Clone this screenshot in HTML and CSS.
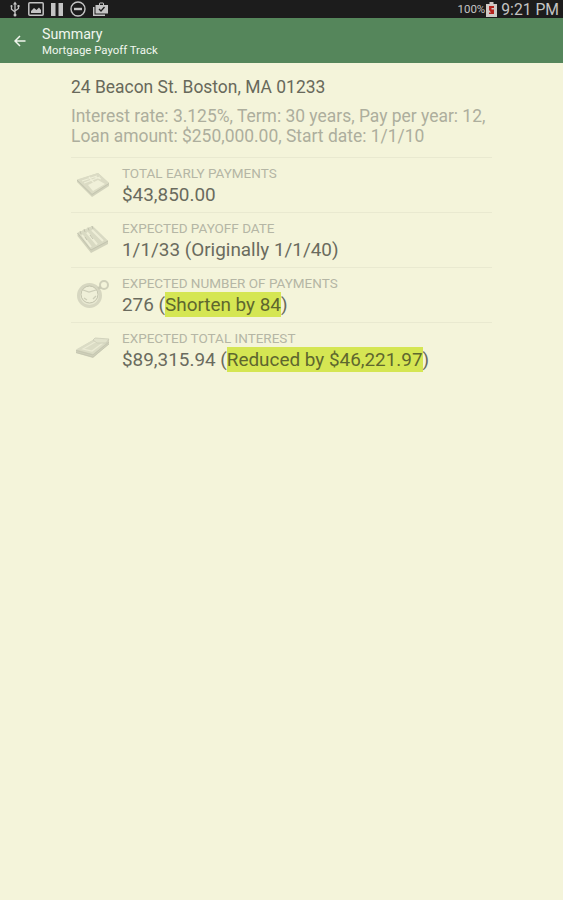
FILE: index.html
```html
<!DOCTYPE html>
<html lang="en">
<head>
  <meta charset="UTF-8">
  <meta name="viewport" content="width=device-width, initial-scale=1">
  <title>Mortgage Payoff Track</title>
  <link rel="stylesheet" href="styles.css">
</head>

<body>

  <div class="status-bar">
    <div class="status-icons">
      <svg width="12" height="16" viewBox="0 0 10 16" fill="none" stroke="#c4c4c4" stroke-width="1.3">
        <path d="M5 2v12M1.500 5v3.200L5 11M8.500 5v2.500L5 10"/>
        <path d="M3 3.500L5 .5l2 3z" fill="#c4c4c4" stroke="none"/>
        <circle cx="1.500" cy="5" r="1" fill="#c4c4c4" stroke="none"/>
        <rect x="7.500" y="4" width="2" height="2" fill="#c4c4c4" stroke="none"/>
        <circle cx="5" cy="14" r="1.500" fill="#c4c4c4" stroke="none"/>
      </svg>
      <svg width="16" height="14" viewBox="0 0 16 14">
        <rect x=".8" y=".8" width="14.400" height="12.400" rx="1" fill="none" stroke="#c4c4c4" stroke-width="1.500"/>
        <path d="M3 11V9l3-3 2.500 2L11 5.500 13 8v3z" fill="#c4c4c4"/>
      </svg>
      <svg width="12" height="13" viewBox="0 0 12 13">
        <path d="M0 0h4.500v13H0zM7.500 0H12v13H7.500z" fill="#c4c4c4"/>
      </svg>
      <svg width="16" height="16" viewBox="0 0 16 16" fill="none" stroke="#c4c4c4">
        <circle cx="8" cy="8" r="7" stroke-width="1.400"/>
        <path d="M4 8h8" stroke-width="2.400"/>
      </svg>
      <svg width="15" height="14" viewBox="0 0 15 14">
        <path d="M0 5h1.500v7.500H12V14H0z" fill="#c4c4c4"/>
        <path d="M2.500 3H6V1.500L7 .5h3l1 1V3h4v8.500H2.500zM7 3h3V1.500H7z" fill="#c4c4c4" fill-rule="evenodd"/>
        <path d="M6 7l2 2 3.500-4" fill="none" stroke="#1c1c1c" stroke-width="1.300"/>
      </svg>
    </div>
    <div class="status-right">
      <span class="percent">100%</span>
      <svg width="11" height="15" viewBox="0 0 11 15">
        <path d="M3.500 0h4v2H11v13H0V2h3.500z" fill="#cfcac6"/>
        <path d="M3 4h5v2H5.500v1.500H8V12H3v-1.500h2L3 8z" fill="#b5231c"/>
      </svg>
      <span class="clock">9:21 PM</span>
    </div>
  </div>

  <header class="app-bar">
    <svg class="back" width="12" height="12" viewBox="0 0 12 12" fill="none" stroke="#f1f6ee" stroke-width="1.500">
      <path d="M11.500 6H1.200M6 1L1 6l5 5"/>
    </svg>
    <div>
      <div class="title">Summary</div>
      <div class="subtitle">Mortgage Payoff Track</div>
    </div>
  </header>

  <main class="content">
    <h1 class="address">24 Beacon St. Boston, MA 01233</h1>
    <p class="loan">Interest rate: 3.125%, Term: 30 years, Pay per year: 12,<br>Loan amount: $250,000.00, Start date: 1/1/10</p>

    <div class="row">
      <svg class="icon" width="36" height="32" viewBox="0 0 36 32">
        <path d="M1 11l21-7 11 10v3L16 28 1 13z" fill="#c9cab4"/>
        <path d="M1 10.500L22 4l11 10-17 11z" fill="#d5d6bf"/>
        <path d="M12 16l10-5 7 4-12 7z" fill="#f0f0d9"/>
        <path d="M6 12l15-5M8 14l16-6M13 8l5 6M19 8l6 2" fill="none" stroke="#eeeed8" stroke-width="1.300"/>
        <path d="M1 11l15 14.500L33 14.500" fill="none" stroke="#b9baa6"/>
      </svg>
      <div class="info">
        <div class="label">TOTAL EARLY PAYMENTS</div>
        <div class="value">$43,850.00</div>
      </div>
    </div>

    <div class="row">
      <svg class="icon" width="36" height="32" viewBox="0 0 36 32">
        <path d="M1.500 9l15-7 15.500 15v3L15 29 1.500 12z" fill="#c9cab4"/>
        <path d="M1.500 9l15-7L32 17l-17 9z" fill="#d3d4be"/>
        <path d="M6 11l9 12M11 8.500l10 12M16 6l11 11" fill="none" stroke="#ededd7" stroke-width="2"/>
        <path d="M1.500 9L15 26l17-9M4 7l1 3M8 5l1 3M12 3.500l1 3M16 2l1 3M9 13l2 3M14 11l3 4" fill="none" stroke="#b7b8a4"/>
      </svg>
      <div class="info">
        <div class="label">EXPECTED PAYOFF DATE</div>
        <div class="value">1/1/33 (Originally 1/1/40)</div>
      </div>
    </div>

    <div class="row">
      <svg class="icon" width="36" height="32" viewBox="0 0 36 32" fill="none">
        <circle cx="13.500" cy="16.500" r="11" fill="#e6e6d0" stroke="#d0d1bb" stroke-width="3"/>
        <circle cx="13.500" cy="15.500" r="8.500" fill="#eeeed8" stroke="#b4b5a0"/>
        <path d="M7 11l6 2 7-2M8 19l3 2M17 20l3-3" stroke="#c3c4af" stroke-width="1.300"/>
        <circle cx="28" cy="6" r="4" stroke="#c6c7b2" stroke-width="2"/>
        <path d="M22 9.500l3-1.500" stroke="#c0c1ac" stroke-width="3"/>
      </svg>
      <div class="info">
        <div class="label">EXPECTED NUMBER OF PAYMENTS</div>
        <div class="value">276 (<mark>Shorten by 84</mark>)</div>
      </div>
    </div>

    <div class="row">
      <svg class="icon" width="36" height="32" viewBox="0 0 36 32">
        <path d="M0 16L17 6l16-1v5L17 24 0 19z" fill="#c8c9b4"/>
        <path d="M0 15.500L17 6l16 1-16 13z" fill="#d6d7c1"/>
        <path d="M7 15l12-7 8 1-11 8z" fill="none" stroke="#eaead4" stroke-width="1.200"/>
        <path d="M17 6l2-2 14 1-3 4h-9z" fill="#dedfc9" stroke="#c2c3ae" stroke-width=".8"/>
        <path d="M0 16.500L17 21 33 8M0 18.500L17 23l16-13" fill="none" stroke="#b8b9a5" stroke-width=".8"/>
      </svg>
      <div class="info">
        <div class="label">EXPECTED TOTAL INTEREST</div>
        <div class="value">$89,315.94 (<mark>Reduced by $46,221.97</mark>)</div>
      </div>
    </div>
  </main>

</body>
</html>
```
FILE: styles.css
```css
body {
  margin: 0;
  background-color: #f4f4da;
  font-family: Roboto, sans-serif;
}

svg {
  display: block;
  flex: none;
}

.status-bar {
  display: flex;
  justify-content: space-between;
  height: 18px;
  background-color: #1c1c1c;
  color: #c4c4c4;
}

.status-icons {
  display: flex;
  align-items: center;
  gap: 7px;
  padding-left: 9px;
}

.status-right {
  display: flex;
  align-items: center;
  padding-right: 4px;
}

.percent {
  margin-right: 1px;
  font-size: 11.5px;
}

.clock {
  margin-left: 4px;
  font-size: 15.7px;
  line-height: 18px;
  padding-top: 2px;
}

.app-bar {
  display: flex;
  height: 45px;
  background-color: #55865b;
  color: #f1f6ee;
}

.back {
  margin: 17px 16px 0 14px;
}

.title {
  margin-top: 7px;
  font-size: 14.2px;
  line-height: 18px;
}

.subtitle {
  font-size: 11.4px;
  line-height: 15px;
}

.content {
  width: 421px;
  margin-left: 71px;
  padding-top: 12px;
}

.address {
  margin: 0;
  font-size: 17.45px;
  font-weight: 400;
  line-height: 24px;
  color: #68695b;
}

.loan {
  margin: 7px 0 11px;
  font-size: 17.45px;
  line-height: 20px;
  white-space: nowrap;
  color: #adae9d;
}

.row {
  display: flex;
  box-sizing: border-box;
  height: 55px;
  border-top: 1px solid #e9e9d0;
}

.icon {
  margin: 11px 10px 0 5px;
  opacity: .8;
}

.label {
  margin-top: 7px;
  font-size: 13.5px;
  line-height: 16px;
  color: #b5b6a5;
}

.value {
  margin-top: 1px;
  font-size: 18.9px;
  line-height: 25px;
  color: #6a6b5e;
}

mark {
  padding: 1px 0;
  background-color: #d5e653;
  color: #5e672e;
}
```
